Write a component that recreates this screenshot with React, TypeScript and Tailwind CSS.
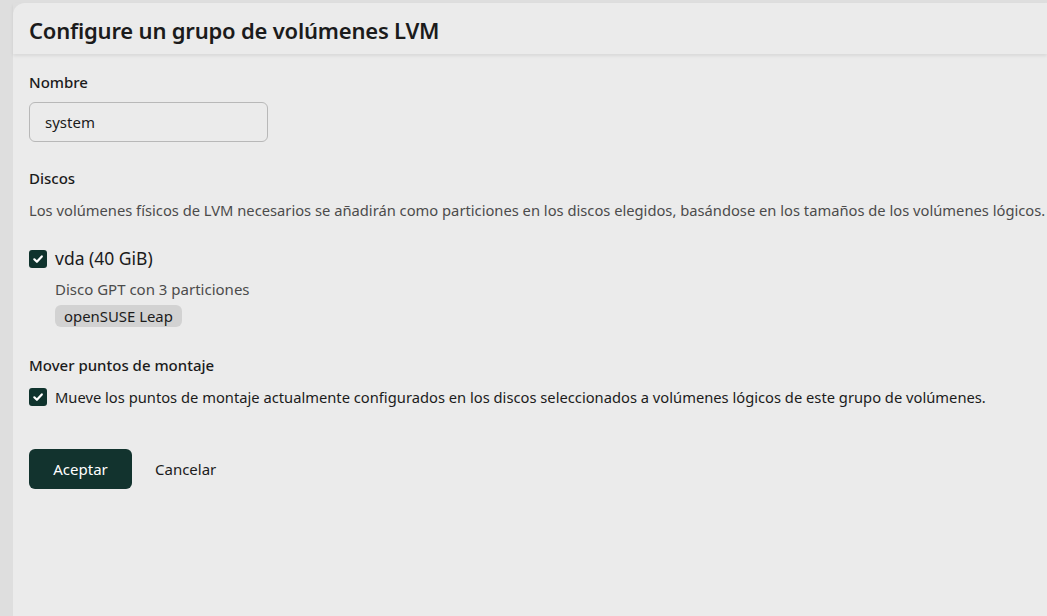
import React from "react";

function Check() {
  return (
    <span className="flex h-[18px] w-[18px] shrink-0 items-center justify-center rounded-[3px] bg-[#0f332d]">
      <svg width="12" height="12" viewBox="0 0 12 12" fill="none">
        <path d="M2.3 6.3 L4.9 8.8 L9.8 3.4" stroke="white" strokeWidth="2.2" strokeLinecap="round" strokeLinejoin="round" />
      </svg>
    </span>
  );
}

export default function App() {
  return (
    <div
      className="h-[616px] w-[1047px] overflow-hidden bg-[#dedede] pl-[13px] pt-[3px] text-[#1b1b1b]"
      style={{ fontFamily: '"Noto Sans", "Open Sans", sans-serif' }}
    >
      <div className="h-full rounded-tl-[12px] bg-[#ebebeb]">
        <div className="flex h-[51px] items-center px-4 pt-[4px] shadow-[0_2px_3px_rgba(0,0,0,0.08)]">
          <h1 className="text-[22px] font-semibold tracking-[-0.2px]">Configure un grupo de volúmenes LVM</h1>
        </div>
        <div className="px-4 pt-[17px]">
          <div className="text-[15px] font-medium leading-[22px]">Nombre</div>
          <div className="mt-[9px] flex h-[40px] w-[239px] items-center rounded-[6px] border border-[#b8b8b8] px-[15px] text-[15px]">
            system
          </div>
          <div className="mt-[25px] text-[15px] font-medium leading-[22px]">Discos</div>
          <p className="mt-[10px] whitespace-nowrap text-[14.72px] leading-[22px] text-[#4b4b4b]">
            Los volúmenes físicos de LVM necesarios se añadirán como particiones en los discos elegidos, basándose en los tamaños de los volúmenes lógicos.
          </p>
          <div className="mt-[24px] flex gap-2">
            <div className="pt-[5px]">
              <Check />
            </div>
            <div>
              <div className="text-[17.5px] leading-[26px]">vda (40 GiB)</div>
              <div className="mt-[8px] text-[15px] leading-[20px] text-[#4b4b4b]">Disco GPT con 3 particiones</div>
              <span className="mt-[6px] inline-block rounded-[6px] bg-[#d2d2d2] px-[9px] text-[14.9px] leading-[22px]">openSUSE Leap</span>
            </div>
          </div>
          <div className="mt-[26px] text-[15px] font-medium leading-[22px]">Mover puntos de montaje</div>
          <div className="mt-[10px] flex items-center gap-2">
            <Check />
            <span className="text-[14.73px] leading-[22px]">
              Mueve los puntos de montaje actualmente configurados en los discos seleccionados a volúmenes lógicos de este grupo de volúmenes.
            </span>
          </div>
          <div className="mt-[41px] flex items-center gap-[23px]">
            <button className="h-[40px] w-[103px] rounded-[6px] bg-[#12332e] text-[15px] text-white">Aceptar</button>
            <button className="text-[15px] text-[#1b1b1b]">Cancelar</button>
          </div>
        </div>
      </div>
    </div>
  );
}
